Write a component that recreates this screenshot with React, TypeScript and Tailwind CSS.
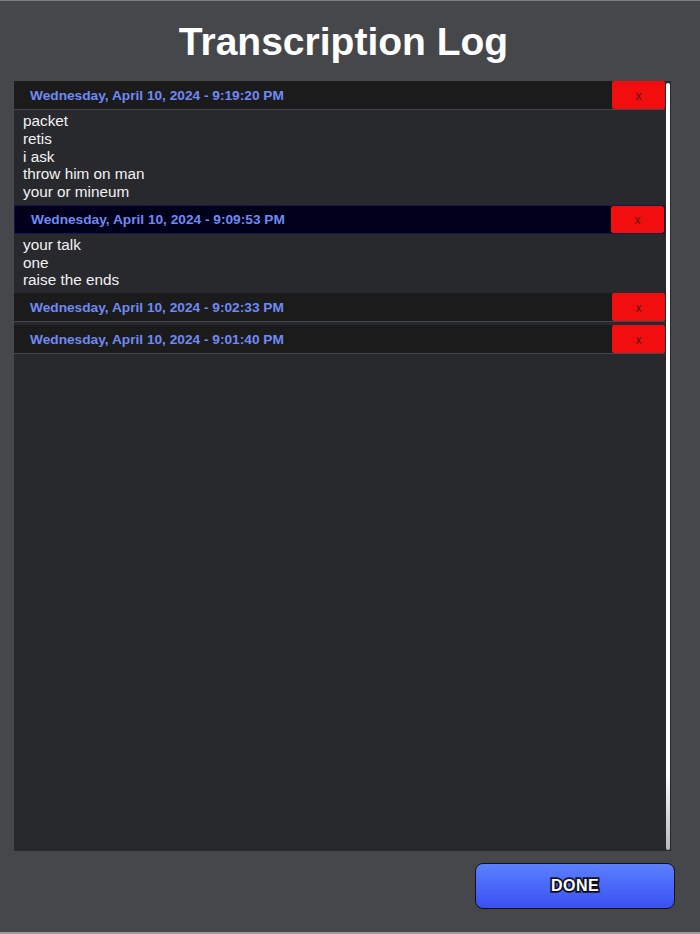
import React from "react";

type Entry = {
  stamp: string;
  lines: string[];
  active?: boolean;
};

const entries: Entry[] = [
  {
    stamp: "Wednesday, April 10, 2024 - 9:19:20 PM",
    lines: ["packet", "retis", "i ask", "throw him on man", "your or mineum"],
  },
  {
    stamp: "Wednesday, April 10, 2024 - 9:09:53 PM",
    lines: ["your talk", "one", "raise the ends"],
    active: true,
  },
  { stamp: "Wednesday, April 10, 2024 - 9:02:33 PM", lines: [] },
  { stamp: "Wednesday, April 10, 2024 - 9:01:40 PM", lines: [] },
];

const font = { fontFamily: '"Liberation Sans", Arial, Helvetica, sans-serif' };

const LogEntry = ({ stamp, lines, active }: Entry) => {
  return (
    <div className="flex flex-col">
      {/* barra de fecha + boton borrar */}
      <div
        className={`flex h-[29px] items-stretch border-b ${
          active ? "bg-[#00001a] border border-[#16164a]" : "bg-[#1b1b1c] border-[#46474b]"
        }`}
      >
        <div className="flex flex-1 items-center pl-[16px] pt-[2px] text-[13.7px] font-bold text-[#7089f3]">
          {stamp}
        </div>
        <button className="flex w-[53px] items-center justify-center rounded-[2px] bg-[#f20e0e] pt-[1px] text-[12px] text-[#5c1414]">
          x
        </button>
      </div>
      {lines.length > 0 ? (
        <div className="pl-[9px] pt-[2px] pb-[4px] text-[15.3px] leading-[17.75px] text-[#f2f2f2]">
          {lines.map((l, i) => (
            <div key={i}>{l}</div>
          ))}
        </div>
      ) : (
        <div className="h-[3px]" />
      )}
    </div>
  );
};

export default function App() {
  return (
    <div
      style={font}
      className="flex h-[934px] w-[700px] flex-col border-t border-b-2 border-t-[#7d7e82] border-b-[#9a9b9e] bg-[#46474b]"
    >
      <h1 className="mt-[16px] h-[50px] pr-[13px] text-center text-[39px] font-bold leading-[50px] text-white">
        Transcription Log
      </h1>

      {/* panel principal */}
      <div className="ml-[14px] mt-[14px] flex h-[770px] w-[657px] bg-[#28292d]">
        <div className="flex w-[651px] flex-col">
          {entries.map((e) => (
            <LogEntry key={e.stamp} {...e} />
          ))}
        </div>
        <div className="ml-[1px] mt-[2px] h-[767px] w-[4px] rounded-full bg-gradient-to-b from-white from-90% to-[#b8b8b8]" />
      </div>

      <div className="flex justify-end pr-[25px] pt-[12px]">
        <button
          className="h-[46px] w-[200px] rounded-[8px] border-[1.5px] border-[#111] bg-gradient-to-b from-[#5c7fff] to-[#3a4ff0] text-[16px] font-bold tracking-[0.5px] text-white"
          style={{ WebkitTextStroke: "3.5px #15152a", paintOrder: "stroke fill", textShadow: "0 1px 1px #000" }}
        >
          DONE
        </button>
      </div>
    </div>
  );
}
